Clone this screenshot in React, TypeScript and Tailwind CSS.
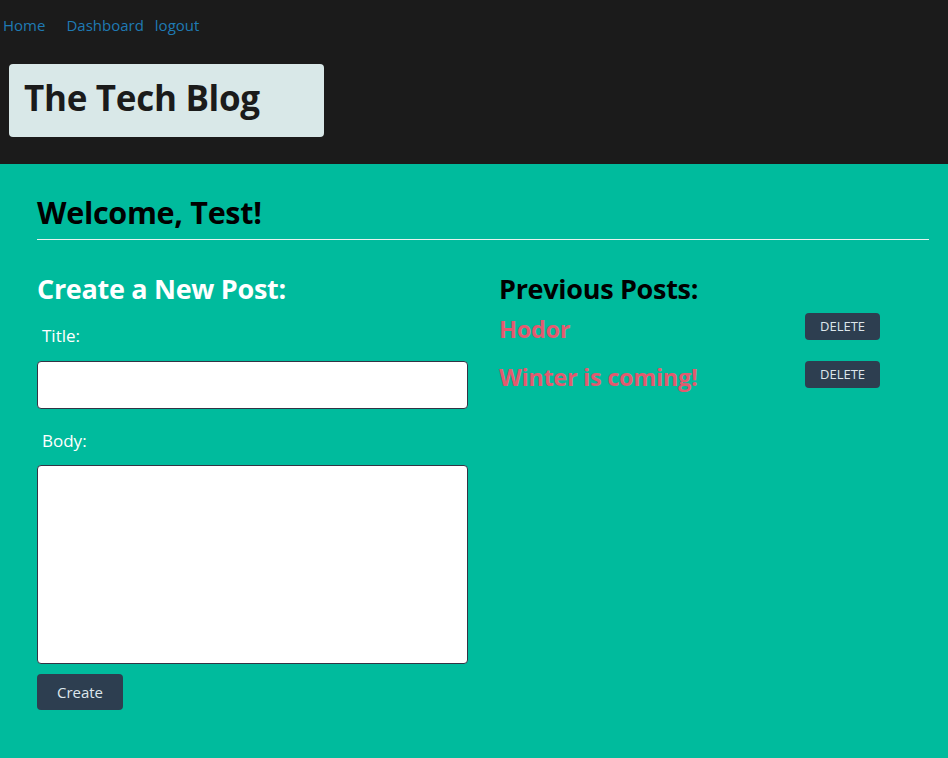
export default function App() {
  const posts = ["Hodor", "Winter is coming!"];

  return (
    <div className="min-h-[758px] bg-[#00bb9d] font-['Open_Sans',sans-serif]">
      {/* Header */}
      <header className="h-[164px] bg-[#1b1b1b] pt-[14px]">
        <nav className="flex text-[15px] leading-[22px] text-[#1f7ab3]">
          <a href="#" className="ml-[3px]">Home</a>
          <a href="#" className="ml-[21px]">Dashboard</a>
          <a href="#" className="ml-[11px]">logout</a>
        </nav>
        <div className="ml-[9px] mt-[28px] flex h-[73px] w-[315px] items-center rounded-[4px] bg-[#d9e8e8] pl-[15px]">
          <h1 className="mt-[-4px] text-[35px] font-bold tracking-[-0.3px] text-[#1b1b1b]">The Tech Blog</h1>
        </div>
      </header>

      {/* Main */}
      <main className="px-[37px] pt-[28px]">
        <h2 className="text-[30.5px] font-bold leading-[40px] tracking-[-0.3px] text-black">Welcome, Test!</h2>
        <hr className="mt-[7px] mr-[-18px] border-t border-[#e6f3ef]" />

        <div className="mt-[31px] flex">
          {/* Create post */}
          <form className="flex w-[431px] flex-col">
            <h3 className="text-[27px] font-bold leading-[36px] tracking-[-0.3px] text-white">Create a New Post:</h3>
            <label className="ml-[5px] mt-[17px] text-[17px] leading-[24px] text-white">Title:</label>
            <input className="mt-[13px] h-[48px] rounded-[4px] border border-[#334] bg-white px-2" />
            <label className="ml-[5px] mt-[20px] text-[17px] leading-[24px] text-white">Body:</label>
            <textarea className="mt-[12px] h-[199px] resize-none rounded-[4px] border border-[#334] bg-white p-2" />
            <button
              type="button"
              className="mt-[10px] h-[36px] w-[86px] rounded-[4px] bg-[#2d3e50] text-[15px] text-[#dde6ec]"
            >
              Create
            </button>
          </form>

          {/* Previous posts */}
          <div className="ml-[31px] flex-1">
            <h3 className="text-[27px] font-bold leading-[36px] tracking-[-0.3px] text-black">Previous Posts:</h3>
            <ul className="mt-[3px] flex w-[381px] flex-col gap-[15px]">
              {posts.map((p) => (
                <li key={p} className="flex items-center justify-between">
                  <span className="pt-[6px] text-[23.5px] font-bold leading-[27px] tracking-[-0.3px] text-[#e35a6f]">{p}</span>
                  <button
                    type="button"
                    className="h-[27px] w-[75px] rounded-[4px] bg-[#2d3e50] text-[13px] text-[#dde6ec]"
                  >
                    DELETE
                  </button>
                </li>
              ))}
            </ul>
          </div>
        </div>
      </main>
    </div>
  );
}
